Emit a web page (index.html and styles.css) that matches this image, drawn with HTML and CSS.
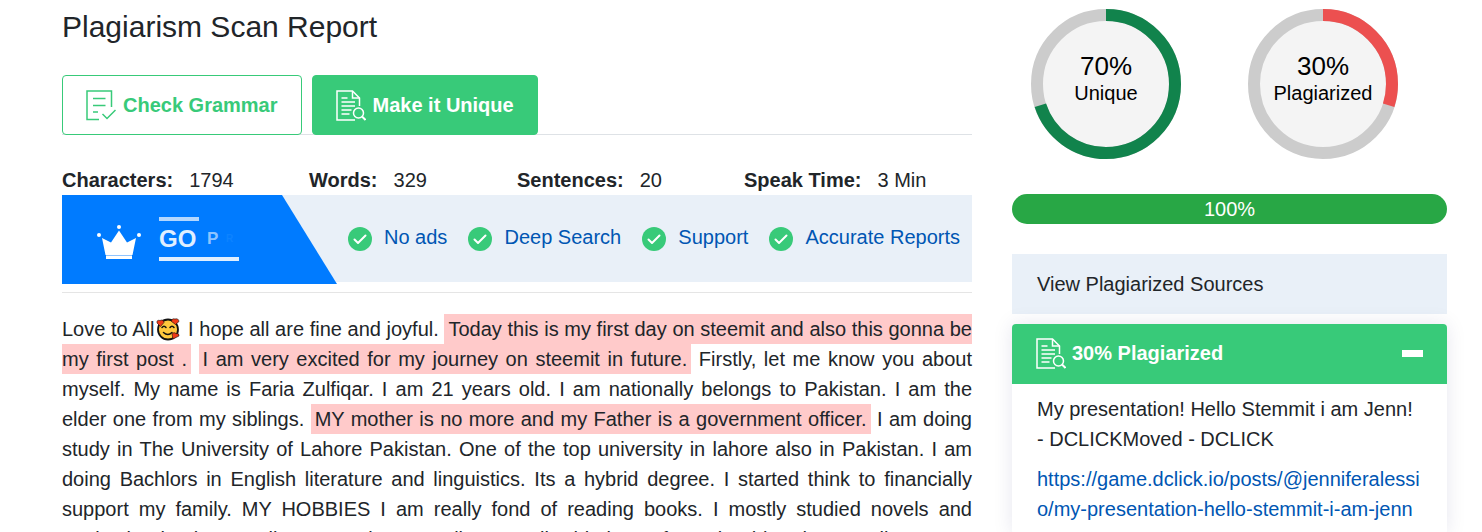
FILE: index.html
```html
<!DOCTYPE html>
<html lang="en">
<head>
    <meta charset="UTF-8">
    <meta name="viewport" content="width=device-width, initial-scale=1.0">
    <title>Plagiarism Scan Report</title>
    <link rel="stylesheet" href="styles.css">
</head>
<body>
    <svg width="0" height="0" class="sprite">
        <symbol id="icon-check" viewBox="0 0 24 24">
            <circle cx="12" cy="12" r="12" fill="#38ca79"/>
            <path d="M6.500 12.500l3.500 3.500 7.500-7.500" fill="none" stroke="#fff" stroke-width="2" stroke-linecap="round" stroke-linejoin="round"/>
        </symbol>
        <symbol id="icon-scan" viewBox="0 0 30 31">
            <g fill="none" stroke="currentColor">
                <path d="M19 30H1V1h15.500l7 7v8" stroke-width="1.500"/>
                <path d="M16.500 1v7h7" stroke-width="1.500"/>
                <path d="M5.500 8h6M5.500 12h13.500M5.500 16h13.500M5.500 20h10M5.500 24h8" stroke-width="1.300"/>
                <circle cx="22.500" cy="23" r="5" stroke-width="1.500"/>
                <path d="M26 26.500l3.500 3.500" stroke-width="2"/>
            </g>
        </symbol>
    </svg>

    <div class="page">
        <main class="report">
            <h1 class="title">Plagiarism Scan Report</h1>

            <div class="tabs">
                <button class="tab tab-outline">
                    <svg class="tab-icon" viewBox="0 0 30 31">
                        <g fill="none" stroke="currentColor" stroke-width="1.500">
                            <path d="M13 29.500H1V1h24.500v16"/>
                            <path d="M7 8.500h12.500M7 15.500h12.500M7 22h5"/>
                            <path d="M16.500 24l4.500 4.500 8.500-8.500"/>
                        </g>
                    </svg>
                    <span>Check Grammar</span>
                </button>
                <button class="tab tab-filled">
                    <svg class="tab-icon"><use href="#icon-scan"/></svg>
                    <span>Make it Unique</span>
                </button>
            </div>

            <div class="stats">
                <div class="stat"><b>Characters:</b><span>1794</span></div>
                <div class="stat"><b>Words:</b><span>329</span></div>
                <div class="stat"><b>Sentences:</b><span>20</span></div>
                <div class="stat"><b>Speak Time:</b><span>3 Min</span></div>
            </div>

            <a class="banner" href="#">
                <div class="go-pro">
                    <svg class="crown" viewBox="0 0 44 35">
                        <g fill="#fff">
                            <circle cx="2" cy="10" r="2"/>
                            <circle cx="22" cy="2" r="2"/>
                            <circle cx="42" cy="10" r="2"/>
                            <path d="M5 13l9 4.500L22 5.500l8 12L39 13l-3.500 17h-27z"/>
                            <path d="M9 31h26v3H9z"/>
                        </g>
                        <path d="M9 30h26v1H9z" fill="#8fc4ff"/>
                    </svg>
                    <div class="go-text">
                        <div class="bar bar-top"></div>
                        <div class="letters"><span class="go">GO</span><span class="p">P</span><span class="r">R</span></div>
                        <div class="bar bar-bottom"></div>
                    </div>
                </div>
                <div class="features">
                    <span class="feature"><svg class="check"><use href="#icon-check"/></svg>No ads</span>
                    <span class="feature"><svg class="check"><use href="#icon-check"/></svg>Deep Search</span>
                    <span class="feature"><svg class="check"><use href="#icon-check"/></svg>Support</span>
                    <span class="feature"><svg class="check"><use href="#icon-check"/></svg>Accurate Reports</span>
                </div>
            </a>

            <p class="content">Love to All<svg class="emoji" viewBox="0 0 24 24">
                <circle cx="12" cy="12.500" r="10" fill="#ffc83d" stroke="#111" stroke-width="1.800"/>
                <path d="M6 10.500q2-2.500 4 0M14 10.500q2-2.500 4 0M7.500 15.500q4.500 4 8.500 0" fill="none" stroke="#111" stroke-width="1.500" stroke-linecap="round"/>
                <g fill="#f03a17" stroke="#111" stroke-width="0.600">
                    <path d="M4.500 9.500L1 6q-.5-3.500 3-2.500 3.500-1.500 4 2z"/>
                    <path d="M19.500 7.500l-4-3q0-3.500 3.500-2.500 3.500-1 4 2.500z"/>
                    <path d="M17 22l-1-5q2-2.500 4-.5 3.500-.5 3 2.500z"/>
                </g>
            </svg> I hope all are fine and joyful. <mark>Today this is my first day on steemit and also this gonna be my first post .</mark> <mark>I am very excited for my journey on steemit in future.</mark> Firstly, let me know you about myself. My name is Faria Zulfiqar. I am 21 years old. I am nationally belongs to Pakistan. I am the elder one from my siblings. <mark>MY mother is no more and my Father is a government officer.</mark> I am doing study in The University of Lahore Pakistan. One of the top university in lahore also in Pakistan. I am doing Bachlors in English literature and linguistics. Its a hybrid degree. I started think to financially support my family. MY HOBBIES I am really fond of reading books. I mostly studied novels and motivation books. I really want to in my reality as well. This is my favourite thing that I really want to continue.</p>
        </main>

        <aside class="sidebar">
            <div class="circles">
                <svg class="circle" viewBox="0 0 150 150">
                    <circle cx="75" cy="75" r="69" class="track"/>
                    <circle cx="75" cy="75" r="69" class="value unique" pathLength="100" stroke-dasharray="70 100" transform="rotate(-90 75 75)"/>
                    <text x="75" y="66" class="percent">70%</text>
                    <text x="75" y="91" class="caption">Unique</text>
                </svg>
                <svg class="circle" viewBox="0 0 150 150">
                    <circle cx="75" cy="75" r="69" class="track"/>
                    <circle cx="75" cy="75" r="69" class="value plagiarized" pathLength="100" stroke-dasharray="30 100" transform="rotate(-90 75 75)"/>
                    <text x="75" y="66" class="percent">30%</text>
                    <text x="75" y="91" class="caption">Plagiarized</text>
                </svg>
            </div>

            <div class="progress">100%</div>

            <div class="sources-title">View Plagiarized Sources</div>

            <div class="card">
                <button class="card-header">
                    <svg class="tab-icon"><use href="#icon-scan"/></svg>
                    <span>30% Plagiarized</span>
                    <span class="minus"></span>
                </button>
                <div class="card-body">
                    <p>My presentation! Hello Stemmit i am Jenn! - DCLICKMoved - DCLICK</p>
                    <a href="#">https://game.dclick.io/posts/@jenniferalessio/my-presentation-hello-stemmit-i-am-jenn</a>
                </div>
            </div>
        </aside>
    </div>
</body>
</html>
```

FILE: styles.css
```css
* {
    box-sizing: border-box;
}
body {
    margin: 0;
    height: 100vh;
    overflow: hidden;
    background-color: #fff;
    color: #212529;
    font-family: "Liberation Sans", Arial, sans-serif;
    font-size: 20px;
    line-height: 30px;
}
a {
    color: #0056b3;
    text-decoration: none;
}
button {
    font: inherit;
    font-weight: bold;
    cursor: pointer;
}
.sprite {
    position: absolute;
}
.page {
    display: flex;
    gap: 40px;
    padding: 9px 35px 0 62px;
}
.report {
    flex: 1;
    min-width: 0;
}
.title {
    margin: 0 0 30px;
    font-size: 30px;
    font-weight: normal;
    line-height: 36px;
}

/* tabs */
.tabs {
    display: flex;
    gap: 10px;
    height: 60px;
    margin-bottom: 30px;
    border-bottom: 1px solid #dee2e6;
}
.tab {
    display: flex;
    align-items: center;
    gap: 7px;
    height: 60px;
    padding: 0 23px;
    border: 1px solid #38ca79;
    border-radius: 4px;
}
.tab-outline {
    background-color: #fff;
    color: #38ca79;
}
.tab-filled {
    background-color: #38ca79;
    color: #fff;
}
.tab-icon {
    width: 30px;
    height: 31px;
}

/* counters */
.stats {
    display: grid;
    grid-template-columns: 247fr 208fr 227fr 228fr;
}
.stat {
    display: flex;
    gap: 16px;
}

/* go pro banner */
.banner {
    display: flex;
    height: 98px;
    border-bottom: 1px solid #e5e5e5;
    background: linear-gradient(#e9f0f8, #e9f0f8) no-repeat 0 0 / 100% 87px;
}
.go-pro {
    display: flex;
    align-items: center;
    gap: 18px;
    width: 275px;
    height: 89px;
    padding: 0 0 2px 35px;
    background-color: #007bff;
    clip-path: polygon(0 0, 80% 0, 100% 100%, 0 100%);
    color: #fff;
}
.crown {
    width: 44px;
    height: 35px;
    margin-top: 8px;
}
.go-text {
    width: 80px;
}
.bar {
    height: 4px;
}
.bar-top {
    width: 40px;
    background-color: #b3d7ff;
}
.bar-bottom {
    background-color: #e0efff;
}
.letters {
    display: flex;
    align-items: center;
    height: 36px;
    font-weight: bold;
}
.go {
    width: 48px;
    color: #e0efff;
    font-size: 24px;
}
.p {
    width: 19px;
    color: #8fc4ff;
    font-size: 17px;
}
.r {
    color: #0d83ff;
    font-size: 10px;
}
.features {
    display: flex;
    flex: 1;
    justify-content: space-between;
    height: 84px;
    padding: 0 12px 0 11px;
}
.feature {
    display: flex;
    align-items: center;
    gap: 12px;
    white-space: nowrap;
}
.check {
    width: 24px;
    height: 24px;
    margin-top: 4px;
}

/* scanned text */
.content {
    margin: 21px 0 0;
    text-align: justify;
}
.content mark {
    padding: 4px;
    background-color: #ffcaca;
    color: #212529;
}
.emoji {
    width: 24px;
    height: 24px;
    margin: 0 2px;
    vertical-align: -5px;
}

/* sidebar */
.sidebar {
    width: 435px;
}
.circles {
    display: flex;
    justify-content: space-between;
    height: 150px;
    padding: 0 49px 0 19px;
}
.circle {
    width: 150px;
    height: 150px;
}
.track {
    fill: #f4f4f4;
    stroke: #ccc;
    stroke-width: 12px;
}
.value {
    fill: none;
    stroke-width: 12px;
}
.unique {
    stroke: #11834c;
}
.plagiarized {
    stroke: #ec5050;
}
.percent {
    font-size: 26px;
    text-anchor: middle;
}
.caption {
    font-size: 20px;
    text-anchor: middle;
}
.progress {
    margin: 35px 0 30px;
    border-radius: 15px;
    background-color: #28a745;
    color: #fff;
    text-align: center;
}
.sources-title {
    margin-bottom: 10px;
    padding: 15px 25px;
    background-color: #e9f0f8;
}
.card {
    border-radius: 4px;
    box-shadow: 0 0 20px rgba(0, 0, 100, 0.1);
}
.card-header {
    display: flex;
    align-items: center;
    gap: 6px;
    width: 100%;
    height: 60px;
    padding: 0 24px 2px;
    border: none;
    border-radius: 4px 4px 0 0;
    background-color: #38ca79;
    color: #fff;
}
.minus {
    width: 21px;
    height: 7px;
    margin-left: auto;
    background-color: #fff;
}
.card-body {
    padding: 10px 25px;
}
.card-body p {
    margin: 0 0 10px;
}
.card-body a {
    word-break: break-all;
}
```
